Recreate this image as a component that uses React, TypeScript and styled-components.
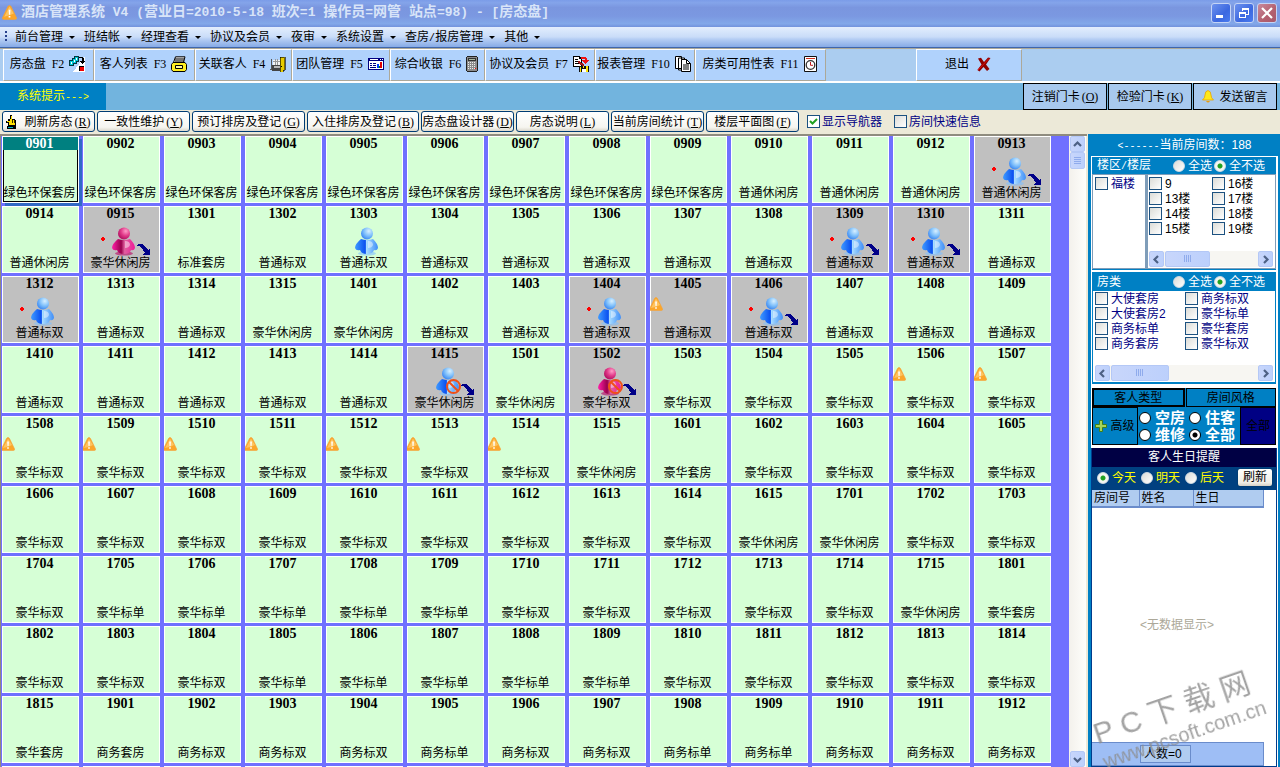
import React from "react";
import styled, { createGlobalStyle, css } from "styled-components";

const sans = `"Liberation Sans", "Noto Sans CJK SC", sans-serif`;
const serif = `"Liberation Serif", "Noto Sans CJK SC", serif`;
const mono = `"Liberation Mono", "Noto Sans CJK SC", monospace`;
const blue = "#0080c4";

const GlobalStyle = createGlobalStyle`
  * { box-sizing: border-box; }
  body { margin: 0; font: 12px/16px ${sans}; color: #000; background: #ece9d8; }
  button, input { font: inherit; color: inherit; margin: 0; }
  button { padding: 0; white-space: nowrap; }
  svg { display: block; flex: none; }
`;

/* ---------- shell ---------- */

const App_ = styled.div`
  height: 100vh;
  display: flex;
  flex-direction: column;
  overflow: hidden;
`;

const TitleBar = styled.header`
  height: 27px;
  flex: none;
  display: flex;
  align-items: center;
  gap: 4px;
  padding: 0 3px 2px 2px;
  color: #d8e4f8;
  background: linear-gradient(#7b9ce8 0, #84a4ea 10%, #7a96df 28%, #7b98e1 60%, #82a8e9 88%, #7292dc 100%);
`;

const TitleText = styled.h1`
  margin: 0;
  flex: 1;
  font: bold 14px/22px ${mono};
  white-space: nowrap;
`;

const TitleLatin = styled.span`
  font-size: 13px;
  white-space: pre;
`;

const WindowButton = styled.button<{ $close?: boolean }>`
  width: 20px;
  height: 20px;
  margin-left: -1px;
  display: grid;
  place-items: center;
  border: 1px solid #c4d4f6;
  border-radius: 3px;
  background: ${(p) =>
    p.$close
      ? "linear-gradient(135deg, #c98a9c, #b3606f 60%, #a8586c)"
      : "linear-gradient(135deg, #6d92ee, #3c68e0 60%, #4a7cf0)"};
`;

const WindowButtons = styled.div`
  display: flex;
  gap: 4px;
`;

const MenuBar = styled.nav`
  height: 21px;
  flex: none;
  display: flex;
  align-items: center;
  padding-left: 5px;
  background: linear-gradient(#e3eefd, #c9dcf8 50%, #b6cef4 60%, #86aae6);
  border-bottom: 1px solid #3f66ac;
`;

const MenuItem = styled.button`
  display: flex;
  align-items: center;
  gap: 6px;
  margin-right: 9px;
  border: 0;
  background: none;
  line-height: 18px;
`;

const Grip = styled.span`
  width: 2px;
  height: 12px;
  margin-right: 8px;
  background: repeating-linear-gradient(#27418c 0 2px, transparent 2px 4px);
`;

const Caret = styled.span`
  border: 3px solid transparent;
  border-top-color: #000;
  border-bottom: 0;
`;

const ToolBar = styled.div`
  height: 35px;
  flex: none;
  display: flex;
  padding-left: 3px;
  background: #abcdf0;
  border-top: 1px solid #aca899;
  border-bottom: 2px solid #fff;
`;

const ToolButton = styled.button<{ $w: number; $gap?: number }>`
  width: ${(p) => p.$w}px;
  display: flex;
  align-items: center;
  justify-content: center;
  gap: ${(p) => p.$gap ?? 5}px;
  padding: 0 2px 2px 0;
  border: 1px solid;
  border-color: #fff #aca899 #aca899 #fff;
  background: #b0d2fc;
`;

const Exit = styled(ToolButton)`
  margin-left: 90px;
`;

const Hotkey = styled.span`
  margin-left: 6px;
  font-family: ${serif};
`;

const PromptBar = styled.div`
  height: 27px;
  flex: none;
  display: flex;
  justify-content: space-between;
  padding-right: 3px;
  background: #72b4de;
`;

const PromptLabel = styled.div`
  width: 106px;
  padding-left: 17px;
  line-height: 26px;
  color: #ff0;
  background: ${blue};
`;

const Fixed = styled.span`
  font: 10px/16px ${mono};
`;

const CardButtons = styled.div`
  display: flex;
  gap: 1px;
`;

const CardButton = styled.button`
  width: 84px;
  display: flex;
  align-items: center;
  justify-content: center;
  gap: 5px;
  border: 1px solid #000;
  background: #a8c9ee;
`;

const Mnemonic = styled.span`
  font-family: ${serif};
  margin-left: 2px;
`;

const ActionBar = styled.div`
  height: 24px;
  flex: none;
  display: flex;
  align-items: center;
  gap: 2px;
  padding: 0 2px 1px;
  background: #ece9d8;
`;

const ActionButton = styled.button<{ $w: number }>`
  width: ${(p) => p.$w}px;
  height: 21px;
  display: flex;
  align-items: center;
  justify-content: center;
  overflow: hidden;
  border: 1px solid #003c74;
  border-radius: 3px;
  background: linear-gradient(#fff, #f6f5f0 80%, #dcd8cc);
`;

const ActionIcon = styled.span`
  margin-right: 6px;
`;

/* ---------- form controls ---------- */

const CheckInput = styled.input.attrs({ type: "checkbox" })`
  appearance: none;
  flex: none;
  width: 13px;
  height: 13px;
  border: 1px solid #1c5180;
  background: linear-gradient(135deg, #dcdcd7, #fff);
  &:checked {
    background: url("data:image/svg+xml,%3Csvg xmlns='http://www.w3.org/2000/svg' viewBox='0 0 11 11'%3E%3Cpath d='M2 5l2.5 2.5L9 3' fill='none' stroke='%2321a121' stroke-width='2'/%3E%3C/svg%3E")
      center / 11px 11px, #fff;
  }
`;

const RadioInput = styled.input.attrs({ type: "radio" })<{ $flat?: boolean }>`
  appearance: none;
  flex: none;
  width: 12px;
  height: 12px;
  border-radius: 50%;
  ${(p) =>
    p.$flat
      ? css`
          border: 1px solid #000;
          background: #fff;
          &:checked { background: radial-gradient(#000 0 2px, #fff 3px); }
        `
      : css`
          border: 1px solid #d2dce4;
          background: linear-gradient(135deg, #dcdcd7, #fff);
          &:checked { background: radial-gradient(#21a121 0 2px, #f4f6f0 3px); }
        `}
`;

const Option = styled.label<{ $color?: string; $gap?: number }>`
  display: flex;
  align-items: center;
  gap: ${(p) => p.$gap ?? 3}px;
  height: 15px;
  color: ${(p) => p.$color ?? "#000"};
  white-space: nowrap;
`;

const Switches = styled.div`
  display: flex;
  gap: 12px;
  margin-left: 6px;
`;

/* ---------- room board ---------- */

const Main = styled.main`
  flex: 1;
  min-height: 0;
  display: flex;
`;

const BoardFrame = styled.section`
  flex: 1;
  min-width: 0;
  display: flex;
  border-top: 2px solid #8f8c7f;
  border-left: 1px solid #8f8c7f;
`;

const Board = styled.div`
  flex: 1;
  min-width: 0;
  display: grid;
  grid-template-columns: repeat(auto-fill, 77px);
  grid-auto-rows: 67px;
  align-content: start;
  gap: 3px 4px;
  padding-left: 1px;
  overflow: hidden;
  background: #7070ff;
`;

const RoomCell = styled.article<{ $busy?: boolean; $selected?: boolean }>`
  position: relative;
  display: flex;
  flex-direction: column;
  justify-content: space-between;
  text-align: center;
  white-space: nowrap;
  border: 1px solid #fff;
  padding-bottom: 1px;
  background: ${(p) => (p.$busy ? "#c0c0c0" : "#d6ffd6")};
  ${(p) =>
    p.$selected &&
    css`
      box-shadow: 3px 3px 0 #316ac5;
      outline: 1px solid #000;
      outline-offset: -2px;
    `}
`;

const RoomNo = styled.b<{ $selected?: boolean }>`
  padding-right: 2px;
  font: bold 14px/13px ${serif};
  ${(p) =>
    p.$selected &&
    css`
      position: relative;
      z-index: 1;
      color: #fff;
      background: #008080;
    `}
`;

const RoomKind = styled.span`
  padding-right: 2px;
  line-height: 16px;
`;

const RoomArt = styled.svg`
  position: absolute;
  top: -1px;
  left: -1px;
`;

/* ---------- scroll bars ---------- */

const VTrack = styled.div`
  width: 18px;
  display: flex;
  flex-direction: column;
  padding: 0 1px;
  background: linear-gradient(90deg, #f3f1ec, #fefefb);
  border-right: 1px solid #ece9d8;
`;

const scrollFace = css`
  display: grid;
  place-items: center;
  border: 1px solid #b4c8f6;
  border-radius: 2px;
  background: linear-gradient(90deg, #c8d6fb, #bcd0fc);
`;

const ScrollArrow = styled.button`
  ${scrollFace}
  width: 15px;
  height: 16px;
  flex: none;
`;

const VThumb = styled.div`
  ${scrollFace}
  height: 17px;
  width: 15px;
  margin-bottom: auto;
`;

const HTrack = styled.div`
  display: flex;
  gap: 1px;
  background: #f7f6f2;
`;

const HThumb = styled.div<{ $w: number }>`
  ${scrollFace}
  width: ${(p) => p.$w}px;
  height: 16px;
  margin-right: auto;
`;

/* ---------- side panel ---------- */

const Gutter = styled.div`
  width: 1px;
  background: #ece9d8;
`;

const Side = styled.aside`
  width: 192px;
  flex: none;
  display: flex;
  flex-direction: column;
  border: solid ${blue};
  border-width: 0 2px 0 3px;
  background: #fff;
`;

const SideTitle = styled.h2`
  margin: 0;
  height: 22px;
  font: 12px/22px ${sans};
  text-align: center;
  color: #fff;
  background: ${blue};
`;

const Group = styled.section`
  margin: 1px 2px 1px 1px;
  border-bottom: 1px solid ${blue};
  background: #fff;
`;

const GroupHead = styled.div<{ $h: number }>`
  height: ${(p) => p.$h}px;
  display: flex;
  align-items: center;
  gap: 2px;
  padding: 0 11px 0 5px;
  color: #fff;
  background: ${blue};
`;

const GroupName = styled.span`
  margin-right: auto;
`;

const Zones = styled.div`
  height: 95px;
  display: flex;
`;

const ZoneList = styled.div`
  width: 54px;
  padding: 1px 2px 2px;
  border: 1px solid #7f9db9;
`;

const FloorBox = styled.div`
  flex: 1;
  display: flex;
  flex-direction: column;
  justify-content: space-between;
  padding: 1px 2px 1px 1px;
  border: 1px solid #7f9db9;
  border-left-width: 2px;
`;

const KindBox = styled.div`
  height: 92px;
  display: flex;
  flex-direction: column;
  justify-content: space-between;
  padding: 0 2px 1px;
  border: 1px solid ${blue};
  border-top: 0;
`;

const OptionGrid = styled.div<{ $first: number }>`
  display: grid;
  grid-template-columns: ${(p) => p.$first}px 1fr;
`;

const Tabs = styled.div`
  display: flex;
  gap: 1px;
  margin: 3px 2px 0 1px;
  background: ${blue};
`;

const TabButton = styled.button<{ $active?: boolean }>`
  flex: 1;
  height: 19px;
  line-height: 14px;
  border: ${(p) => (p.$active ? 2 : 1)}px solid #000;
  background: ${blue};
`;

const FilterRow = styled.div`
  display: flex;
  height: 38px;
  margin: 0 2px 3px 1px;
  background: ${blue};
`;

const AdvancedButton = styled.button`
  width: 46px;
  display: flex;
  align-items: center;
  justify-content: center;
  gap: 3px;
  border: 1px solid #000;
  background: ${blue};
`;

const AllButton = styled.button`
  width: 36px;
  border: 1px solid #000;
  background: #000084;
`;

const StateGrid = styled.div`
  flex: 1;
  display: grid;
  grid-template-columns: 50px 1fr;
  align-content: center;
  padding-left: 1px;
  font: bold 15px/17px ${sans};
`;

const StateOption = styled(Option)`
  height: 17px;
`;

const Birthday = styled.section`
  flex: 1;
  min-height: 0;
  display: flex;
  flex-direction: column;
  margin-right: 1px;
  border: solid #003c8c;
  border-width: 0 1px 1px;
`;

const BirthdayTitle = styled.h2`
  margin: 0;
  font: 12px/19px ${sans};
  text-align: center;
  color: #fff;
  background: #000044;
`;

const DayRow = styled.div`
  height: 23px;
  display: flex;
  align-items: center;
  gap: 5px;
  padding: 0 3px 2px 5px;
  background: #004080;
`;

const RefreshButton = styled.button`
  width: 36px;
  height: 19px;
  margin-left: auto;
  line-height: 15px;
  border: 1px solid #003c74;
  border-radius: 3px;
  background: linear-gradient(#fff, #f0eee6 80%, #d6d0c5);
`;

const GuestTable = styled.table`
  width: 171px;
  table-layout: fixed;
  border-collapse: collapse;
  background: #b0ccf0;
  border-bottom: 2px solid #6a8ccb;
`;

const GuestTh = styled.th<{ $w: number }>`
  width: ${(p) => p.$w}px;
  height: 17px;
  padding: 0 2px;
  line-height: 15px;
  font-weight: normal;
  text-align: left;
  border-right: 1px solid #6a8ccb;
`;

const EmptyList = styled.div`
  flex: 1;
  display: grid;
  place-items: center;
  padding-right: 14px;
  color: #aca899;
`;

const GuestFooter = styled.div`
  width: 172px;
  height: 24px;
  padding: 2px 0 0 48px;
  border: 1px solid #6a8ccb;
  border-left: 0;
  background: #9ebef5;
`;

const GuestCount = styled.output`
  display: block;
  width: 51px;
  height: 18px;
  padding-left: 3px;
  line-height: 16px;
  border: 1px solid #6a8ccb;
  background: #b0ccf0;
`;

const Watermark = styled.div`
  position: fixed;
  right: 1px;
  bottom: 22px;
  width: 186px;
  transform: rotate(-19deg);
  color: rgba(140, 140, 140, 0.8);
  pointer-events: none;
  font: 20px/24px ${sans};
`;

const WatermarkName = styled.div`
  display: flex;
  gap: 8px;
  font: 30px/34px ${sans};
`;

/* ---------- icons ---------- */

const WarningIcon = ({ size = 14 }: { size?: number }) => (
  <svg width={size} height={size} viewBox="0 0 14 14">
    <WarningShape />
  </svg>
);

const WarningShape = () => (
  <>
    <path d="M7 .5 Q8 .5 8.5 1.5 L13.6 12 Q13.8 13.5 12.5 13.5 H1.5 Q.2 13.5 .4 12 L5.5 1.5 Q6 .5 7 .5Z" fill="#fba62a" stroke="#f3a33c" strokeWidth=".6" />
    <path d="M7 1.5 L2 11 Q8 10 11 8Z" fill="#ffd277" opacity=".7" />
    <path d="M6.2 4.5h1.7l-.3 4.6h-1.1zM6.2 10.2h1.6v1.5h-1.6z" fill="#fff" />
  </>
);

const BoardIcon = () => (
  <svg width="16" height="16" viewBox="0 0 16 16" shapeRendering="crispEdges">
    <path d="M16 0V16H4Z" fill="#fff" />
    <path d="M0 4h5v6H0zM3 2h5v6H3zM5 0h5v6H5z" fill="#003840" />
    <path d="M1 5h3v4H1zM4 3h3v4H4zM6 1h3v4H6z" fill="#00c8d8" />
    <path d="M2 6h1v2H2zM5 4h1v2H5zM7 2h1v2H7z" fill="#fff" />
    <path d="M10 1h4v1h1v3h1v1h-1v1h-1v1h-1V7h-1V6h-1V5h2V2h-3z" fill="#000" />
    <path d="M10 10h5v5h-5z" fill="#000" />
    <path d="M11 11h4v4h-4z" fill="#f00000" />
  </svg>
);

const DrawerIcon = () => (
  <svg width="16" height="16" viewBox="0 0 16 16">
    <path d="M2.500 6.500 4.500 .8H14l-1.500 5.700Z" fill="#e8e8e8" stroke="#000" />
    <path d="M4 3h9M4 5h9" stroke="#000" />
    <path d="M2 6.500h12l1.500 2v5l-1.500 2H2l-1.500-2v-5Z" fill="#ffee20" stroke="#000" />
    <path d="M4.500 9.500h7v3h-7z" fill="#fff9a0" stroke="#000" />
  </svg>
);

const LinkGuestIcon = () => (
  <svg width="16" height="16" viewBox="0 0 16 16" shapeRendering="crispEdges">
    <path d="M1 3v10M0 13h4M3 4v9" stroke="#555" fill="none" />
    <path d="M3 4h7v5H3z" fill="#f4f4f4" />
    <path d="M3 5.500h7M5.500 3v6M7.500 3v6" stroke="#999" />
    <path d="M2 9h9v6H2z" fill="#444" />
    <path d="M4 10h7v2H4z" fill="#b8b8b8" />
    <path d="M10 1h5v13h-2v2h-3z" fill="#e6cc00" stroke="#000" strokeWidth=".6" />
    <path d="M14.500 1v13" stroke="#806c00" />
    <path d="M11 10h1v1h-1z" fill="#000" />
  </svg>
);

const TeamIcon = () => (
  <svg width="16" height="16" viewBox="0 0 16 16" shapeRendering="crispEdges">
    <path d="M0 2h16v12H0z" fill="#000080" />
    <path d="M1 5h14v8H1z" fill="#fff" />
    <path d="M2 3h8v1H2zM12 3h1v1h-1zM14 3h1v1h-1z" fill="#fff" />
    <path d="M2 7h2v1H2zM5 7h3v1H5zM2 9h2v1H2zM5 9h3v1H5zM2 11h6v1H2z" fill="#000080" />
    <path d="M9 8h2v4H9z" fill="#0040ff" />
    <path d="M11 10h1v2h-1z" fill="#008000" />
    <path d="M12 6h2v6h-2z" fill="#e00000" />
  </svg>
);

const CalculatorIcon = () => (
  <svg width="12" height="16" viewBox="0 0 12 16" shapeRendering="crispEdges">
    <path d="M1 0h10v1h1v14h-1v1H1v-1H0V1h1z" fill="#222" />
    <path d="M1 1h10v14H1z" fill="#8c8c8c" />
    <path d="M2 2h8v3H2z" fill="#333" />
    <path d="M3 3h6v1H3z" fill="#a8b8a0" />
    <path d="M2 6.500h8M2 8.500h8M2 10.500h8M2 12.500h8" stroke="#eee" strokeDasharray="1 1" />
    <path d="M9 12h1v1H9z" fill="#f00" />
  </svg>
);

const AgreementIcon = () => (
  <svg width="16" height="16" viewBox="0 0 16 16" shapeRendering="crispEdges">
    <path d="M0 0h7v1h1v1h1v9H0z" fill="#000" />
    <path d="M1 1h5v2h2v7H1z" fill="#fff" />
    <path d="M2 3h3v1H2zM2 5h5v1H2zM2 7h5v1H2z" fill="#000" />
    <path d="M8 1h5v1h1v2h2v1h-1v1h-1v1h-1v1h-1V7h-1V6h-1V5H9V4h3V3H8z" fill="#f01010" />
    <path d="M5 5h2v1h1v1h2v1h1v2H9V9H7V8H6V7H5z" fill="#a01818" />
    <path d="M6 10h10v6H6z" fill="#111" />
    <path d="M7 11h1v5H7zM13 10h2v6h-2zM10 10h1v2h-1z" fill="#ffe600" />
    <path d="M9 13h4v3H9z" fill="#fff" />
  </svg>
);

const ReportIcon = () => (
  <svg width="16" height="16" viewBox="0 0 16 16">
    <path d="M.5 .5h6v12h-6zM3.500 2h6v12h-6z" fill="#fff" stroke="#000" />
    <path d="M6.500 3.500h5l4 4v8h-9z" fill="#fff" stroke="#000" />
    <path d="M11.500 3.500v4h4" fill="none" stroke="#000" />
    <path d="M8 9h6M8 11h6M8 13h6" stroke="#000" />
  </svg>
);

const ScheduleIcon = () => (
  <svg width="13" height="16" viewBox="0 0 13 16">
    <path d="M.5 .5h12v15H.5z" fill="#fff" stroke="#111" />
    <path d="M2 2.500h9" stroke="#d03020" />
    <circle cx="6.500" cy="9" r="4.300" fill="#fff" stroke="#333" strokeWidth="1.300" />
    <path d="M6.500 6v3.300H9" fill="none" stroke="#c02020" />
  </svg>
);

const ExitIcon = () => (
  <svg width="14" height="15" viewBox="0 0 14 15">
    <path d="M1 1.500 4 .8 7 5 11 .500 13.500 1 9 7.500 12.500 12 10 14 6.500 10 2.500 14.500 .3 13 4.500 7.500Z" fill="#8e0000" />
    <path d="M1 13 12 1.500" stroke="#e01010" strokeWidth="1" />
  </svg>
);

const BellIcon = () => (
  <svg width="12" height="13" viewBox="0 0 12 13">
    <path d="M6 .5Q9 1 9 5q0 3 2.500 5H.5Q3 8 3 5q0-4 3-4.500Z" fill="#ffe81a" stroke="#e8a400" strokeWidth=".8" />
    <path d="M4 11h4q-2 3-4 0Z" fill="#e89a10" />
  </svg>
);

const HandIcon = () => (
  <svg width="12" height="16" viewBox="0 0 12 16" shapeRendering="crispEdges">
    <path d="M4 1h2v4h3v1h1v6H2V9H0V7h2V5h2z" fill="#000" />
    <path d="M5 2h1v4h3v5H3V8H1V7h3V5h1z" fill="#ffe000" />
    <path d="M6 6v3M8 6v3" stroke="#000" strokeWidth=".8" />
    <path d="M1 12h9v3H1z" fill="#000" />
    <path d="M2 13h5v1H2z" fill="#00b0c0" />
  </svg>
);

const PlusIcon = () => (
  <svg width="12" height="12" viewBox="0 0 12 12">
    <path d="M4.500 .500h3v4h4v3h-4v4h-3v-4h-4v-3h4z" fill="#a4d45a" stroke="#3f7f1c" />
  </svg>
);

const arrows = { up: "M2 7l3.500-3.500L9 7", down: "M2 4l3.500 3.500L9 4", left: "M7 2 3.500 5.500 7 9", right: "M4 2l3.500 3.500L4 9" };

const Arrow = ({ to }: { to: keyof typeof arrows }) => (
  <svg width="11" height="11" viewBox="0 0 11 11">
    <path d={arrows[to]} fill="none" stroke="#4d6185" strokeWidth="2.200" />
  </svg>
);

const GripLines = ({ vertical }: { vertical?: boolean }) => (
  <svg width="8" height="8" viewBox="0 0 8 8" shapeRendering="crispEdges">
    <path d={vertical ? "M.5 0v7M2.500 0v7M4.500 0v7M6.500 0v7" : "M0 .5h7M0 2.500h7M0 4.500h7M0 6.500h7"} stroke="#8fabec" />
  </svg>
);

const HScroll = ({ thumb, name }: { thumb: number; name: string }) => (
  <HTrack>
    <ScrollArrow aria-label={`${name} 左移`}><Arrow to="left" /></ScrollArrow>
    <HThumb $w={thumb}><GripLines vertical /></HThumb>
    <ScrollArrow aria-label={`${name} 右移`}><Arrow to="right" /></ScrollArrow>
  </HTrack>
);

/* ---------- room data ---------- */

type Guest = "m" | "f";
interface Mark { guest?: Guest; dot?: boolean; leave?: boolean; ban?: boolean; warn?: boolean }

const marks: Record<string, Mark> = {
  "0913": { guest: "m", dot: true, leave: true },
  "0915": { guest: "f", dot: true, leave: true },
  "1303": { guest: "m" },
  "1309": { guest: "m", dot: true, leave: true },
  "1310": { guest: "m", dot: true, leave: true },
  "1312": { guest: "m", dot: true },
  "1404": { guest: "m", dot: true },
  "1405": { warn: true },
  "1406": { guest: "m", dot: true, leave: true },
  "1415": { guest: "m", ban: true, leave: true },
  "1502": { guest: "f", ban: true, leave: true },
};
["1506", "1507", "1508", "1509", "1510", "1511", "1512", "1513", "1514"].forEach((no) => {
  marks[no] = { warn: true };
});

const busyRooms = new Set(["0913", "0915", "1309", "1310", "1312", "1404", "1405", "1406", "1415", "1502"]);

/* Each entry: floor, first and last room on it, and the kind they share. */
const ranges: [number, number, number, string][] = [
  [9, 1, 1, "绿色环保套房"], [9, 2, 9, "绿色环保客房"], [9, 10, 14, "普通休闲房"], [9, 15, 15, "豪华休闲房"],
  [13, 1, 1, "标准套房"], [13, 2, 14, "普通标双"], [13, 15, 15, "豪华休闲房"],
  [14, 1, 1, "豪华休闲房"], [14, 2, 14, "普通标双"], [14, 15, 15, "豪华休闲房"],
  [15, 1, 1, "豪华休闲房"], [15, 2, 14, "豪华标双"], [15, 15, 15, "豪华休闲房"],
  [16, 1, 1, "豪华套房"], [16, 2, 14, "豪华标双"], [16, 15, 15, "豪华休闲房"],
  [17, 1, 1, "豪华休闲房"], [17, 2, 4, "豪华标双"], [17, 5, 9, "豪华标单"], [17, 10, 14, "豪华标双"], [17, 15, 15, "豪华休闲房"],
  [18, 1, 1, "豪华套房"], [18, 2, 4, "豪华标双"], [18, 5, 9, "豪华标单"], [18, 10, 14, "豪华标双"], [18, 15, 15, "豪华套房"],
  [19, 1, 1, "商务套房"], [19, 2, 4, "商务标双"], [19, 5, 5, "商务标单"], [19, 6, 7, "商务标双"], [19, 8, 9, "商务标单"], [19, 10, 12, "商务标双"],
];

const rooms = ranges.flatMap(([floor, from, to, kind]) =>
  Array.from({ length: to - from + 1 }, (_, i) => ({
    no: String(floor * 100 + from + i).padStart(4, "0"),
    kind,
  }))
);

const MarkArt = ({ guest, dot, leave, ban, warn }: Mark) => (
  <RoomArt width="77" height="67" viewBox="0 0 77 67" aria-hidden="true">
    <defs>
      <radialGradient id="mHead" cx=".65" cy=".3" r=".8">
        <stop offset="0" stopColor="#d8f0ff" /><stop offset=".5" stopColor="#7fc0fb" /><stop offset="1" stopColor="#2f7df0" />
      </radialGradient>
      <linearGradient id="mBody" x1="0" x2="1">
        <stop offset="0" stopColor="#3f9bff" /><stop offset=".45" stopColor="#0a4ff0" /><stop offset=".5" stopColor="#a8dcff" /><stop offset="1" stopColor="#3f8ef8" />
      </linearGradient>
      <radialGradient id="fHead" cx=".65" cy=".3" r=".8">
        <stop offset="0" stopColor="#ff9cc8" /><stop offset=".5" stopColor="#e03888" /><stop offset="1" stopColor="#a80858" />
      </radialGradient>
      <linearGradient id="fBody" x1="0" x2="1">
        <stop offset="0" stopColor="#ff1fa8" /><stop offset=".4" stopColor="#98004c" /><stop offset=".55" stopColor="#e060a0" /><stop offset="1" stopColor="#f01898" />
      </linearGradient>
    </defs>
    {dot && <path d="M19 31h2v1h1v2h-1v1h-2v-1h-1v-2h1z" fill="#f00" />}
    {guest && (
      <>
        <ellipse cx="41" cy="47.500" rx="9" ry="2" fill={guest === "m" ? "#7fc0ff" : "#b80060"} opacity=".6" />
        <path d="M35 33q6 2 12 0 5 5 5 9-1 3-4 2-1 4-7 4t-7-4q-4 1-5-2 0-4 6-9Z" fill={`url(#${guest}Body)`} />
        <path d="M42 35q5 0 5 4-1 3-5 3Z" fill="#fff" opacity=".45" />
        <circle cx="41" cy="27.500" r="6" fill={`url(#${guest}Head)`} />
      </>
    )}
    {ban && (
      <g fill="none" stroke="#f05018" strokeWidth="2">
        <circle cx="46.500" cy="40.500" r="6.500" />
        <path d="M42 36l9 9" />
      </g>
    )}
    {leave && (
      <path d="M53 40l2-2h4l6 6 2-2v7h-8l3-2-4-6-2-1h-3z" fill="#000088" shapeRendering="crispEdges" />
    )}
    {warn && <g transform="translate(-1 21)"><WarningShape /></g>}
  </RoomArt>
);

/* ---------- page ---------- */

const menus = ["前台管理", "班结帐", "经理查看", "协议及会员", "夜审", "系统设置", "查房/报房管理", "其他"];

const tools: [string, string, number, React.ReactNode][] = [
  ["房态盘", "F2", 91, <BoardIcon />],
  ["客人列表", "F3", 101, <DrawerIcon />],
  ["关联客人", "F4", 97, <LinkGuestIcon />],
  ["团队管理", "F5", 98, <TeamIcon />],
  ["综合收银", "F6", 95, <CalculatorIcon />],
  ["协议及会员", "F7", 110, <AgreementIcon />],
  ["报表管理", "F10", 100, <ReportIcon />],
  ["房类可用性表", "F11", 131, <ScheduleIcon />],
];

const actions: [string, string, number][] = [
  ["刷新房态", "R", 93],
  ["一致性维护", "Y", 93],
  ["预订排房及登记", "G", 113],
  ["入住排房及登记", "B", 112],
  ["房态盘设计器", "D", 93],
  ["房态说明", "L", 93],
  ["当前房间统计", "T", 93],
  ["楼层平面图", "F", 93],
];

const floors = ["9", "16楼", "13楼", "17楼", "14楼", "18楼", "15楼", "19楼"];
const kinds = ["大使套房", "商务标双", "大使套房2", "豪华标单", "商务标单", "豪华套房", "商务套房", "豪华标双"];

const Key = ({ k }: { k: string }) => <Mnemonic>(<u>{k}</u>)</Mnemonic>;

const titleParts = "酒店管理系统 V4 (营业日=2010-5-18 班次=1 操作员=网管 站点=98) - [房态盘]".split(/([\x20-\x7e]+)/);

export default function App() {
  return (
    <App_>
      <GlobalStyle />
      <TitleBar>
        <WarningIcon size={15} />
        <TitleText>
          {titleParts.map((t, i) => (i % 2 ? <TitleLatin key={i}>{t}</TitleLatin> : t))}
        </TitleText>
        <WindowButtons>
          <WindowButton aria-label="最小化">
            <svg width="12" height="12"><path d="M1 8h7v3H1z" fill="#fff" /></svg>
          </WindowButton>
          <WindowButton aria-label="还原">
            <svg width="12" height="12" shapeRendering="crispEdges">
              <path d="M4.500 4V1.500h6v6H8M4 2h7" fill="none" stroke="#fff" />
              <path d="M1.500 5.500h6v5h-6zM1 6.500h7" fill="none" stroke="#fff" />
            </svg>
          </WindowButton>
          <WindowButton $close aria-label="关闭">
            <svg width="12" height="12"><path d="M1 1l10 10M11 1 1 11" stroke="#fff" strokeWidth="2.200" /></svg>
          </WindowButton>
        </WindowButtons>
      </TitleBar>

      <MenuBar>
        <Grip />
        {menus.map((m) => (
          <MenuItem key={m}>
            <span>{m.split(/(\/)/).map((t, i) => (i % 2 ? <Fixed key={i}>{t}</Fixed> : t))}</span>
            <Caret />
          </MenuItem>
        ))}
      </MenuBar>

      <ToolBar>
        {tools.map(([label, key, w, icon]) => (
          <ToolButton key={key} $w={w}>
            <span>{label}<Hotkey>{key}</Hotkey></span>
            {icon}
          </ToolButton>
        ))}
        <Exit $w={106} $gap={8}>退出<ExitIcon /></Exit>
      </ToolBar>

      <PromptBar>
        <PromptLabel>系统提示<Fixed>---&gt;</Fixed></PromptLabel>
        <CardButtons>
          <CardButton><span>注销门卡<Key k="O" /></span></CardButton>
          <CardButton><span>检验门卡<Key k="K" /></span></CardButton>
          <CardButton><BellIcon />发送留言</CardButton>
        </CardButtons>
      </PromptBar>

      <ActionBar>
        {actions.map(([label, key, w], i) => (
          <ActionButton key={key} $w={w}>
            {i === 0 && <ActionIcon><HandIcon /></ActionIcon>}
            <span>{label}<Key k={key} /></span>
          </ActionButton>
        ))}
        <Switches>
          <Option $color="#000084" $gap={2}><CheckInput defaultChecked />显示导航器</Option>
          <Option $color="#000084" $gap={2}><CheckInput />房间快速信息</Option>
        </Switches>
      </ActionBar>

      <Main>
        <BoardFrame>
          <Board>
            {rooms.map(({ no, kind }) => (
              <RoomCell key={no} $busy={busyRooms.has(no)} $selected={no === "0901"}>
                <RoomNo $selected={no === "0901"}>{no}</RoomNo>
                {marks[no] && <MarkArt {...marks[no]} />}
                <RoomKind>{kind}</RoomKind>
              </RoomCell>
            ))}
            {Array.from({ length: 13 }, (_, i) => <RoomCell key={i} />)}
          </Board>
          <VTrack>
            <ScrollArrow aria-label="上移"><Arrow to="up" /></ScrollArrow>
            <VThumb><GripLines /></VThumb>
            <ScrollArrow aria-label="下移"><Arrow to="down" /></ScrollArrow>
          </VTrack>
        </BoardFrame>
        <Gutter />

        <Side>
          <SideTitle><Fixed>&lt;------</Fixed>当前房间数：188</SideTitle>
          <Group>
            <GroupHead $h={17}>
              <GroupName>楼区<Fixed>/</Fixed>楼层</GroupName>
              <Option $color="#fff"><RadioInput name="zone" />全选</Option>
              <Option $color="#fff"><RadioInput name="zone" defaultChecked />全不选</Option>
            </GroupHead>
            <Zones>
              <ZoneList>
                <Option $color="#000084"><CheckInput />福楼</Option>
              </ZoneList>
              <FloorBox>
                <OptionGrid $first={63}>
                  {floors.map((f) => <Option key={f}><CheckInput />{f}</Option>)}
                </OptionGrid>
                <HScroll thumb={45} name="楼层" />
              </FloorBox>
            </Zones>
          </Group>
          <Group>
            <GroupHead $h={19}>
              <GroupName>房类</GroupName>
              <Option $color="#fff"><RadioInput name="kind" />全选</Option>
              <Option $color="#fff"><RadioInput name="kind" defaultChecked />全不选</Option>
            </GroupHead>
            <KindBox>
              <OptionGrid $first={90}>
                {kinds.map((k) => <Option key={k} $color="#000084"><CheckInput />{k}</Option>)}
              </OptionGrid>
              <HScroll thumb={58} name="房类" />
            </KindBox>
          </Group>

          <Tabs>
            <TabButton $active>客人类型</TabButton>
            <TabButton>房间风格</TabButton>
          </Tabs>
          <FilterRow>
            <AdvancedButton><PlusIcon />高级</AdvancedButton>
            <StateGrid>
              {["空房", "住客", "维修", "全部"].map((s) => (
                <StateOption key={s} $color="#fff" $gap={4}>
                  <RadioInput $flat name="state" defaultChecked={s === "全部"} />{s}
                </StateOption>
              ))}
            </StateGrid>
            <AllButton>全部</AllButton>
          </FilterRow>

          <Birthday>
            <BirthdayTitle>客人生日提醒</BirthdayTitle>
            <DayRow>
              {["今天", "明天", "后天"].map((d) => (
                <Option key={d} $color="#ff0">
                  <RadioInput name="day" defaultChecked={d === "今天"} />{d}
                </Option>
              ))}
              <RefreshButton>刷新</RefreshButton>
            </DayRow>
            <GuestTable>
              <thead>
                <tr>
                  <GuestTh $w={47}>房间号</GuestTh>
                  <GuestTh $w={54}>姓名</GuestTh>
                  <GuestTh $w={70}>生日</GuestTh>
                </tr>
              </thead>
            </GuestTable>
            <EmptyList>&lt;无数据显示&gt;</EmptyList>
            <GuestFooter><GuestCount>人数=0</GuestCount></GuestFooter>
          </Birthday>
        </Side>
      </Main>

      <Watermark>
        <WatermarkName>
          {["P", "C", "下", "载", "网"].map((c) => <span key={c}>{c}</span>)}
        </WatermarkName>
        www.pcsoft.com.cn
      </Watermark>
    </App_>
  );
}
